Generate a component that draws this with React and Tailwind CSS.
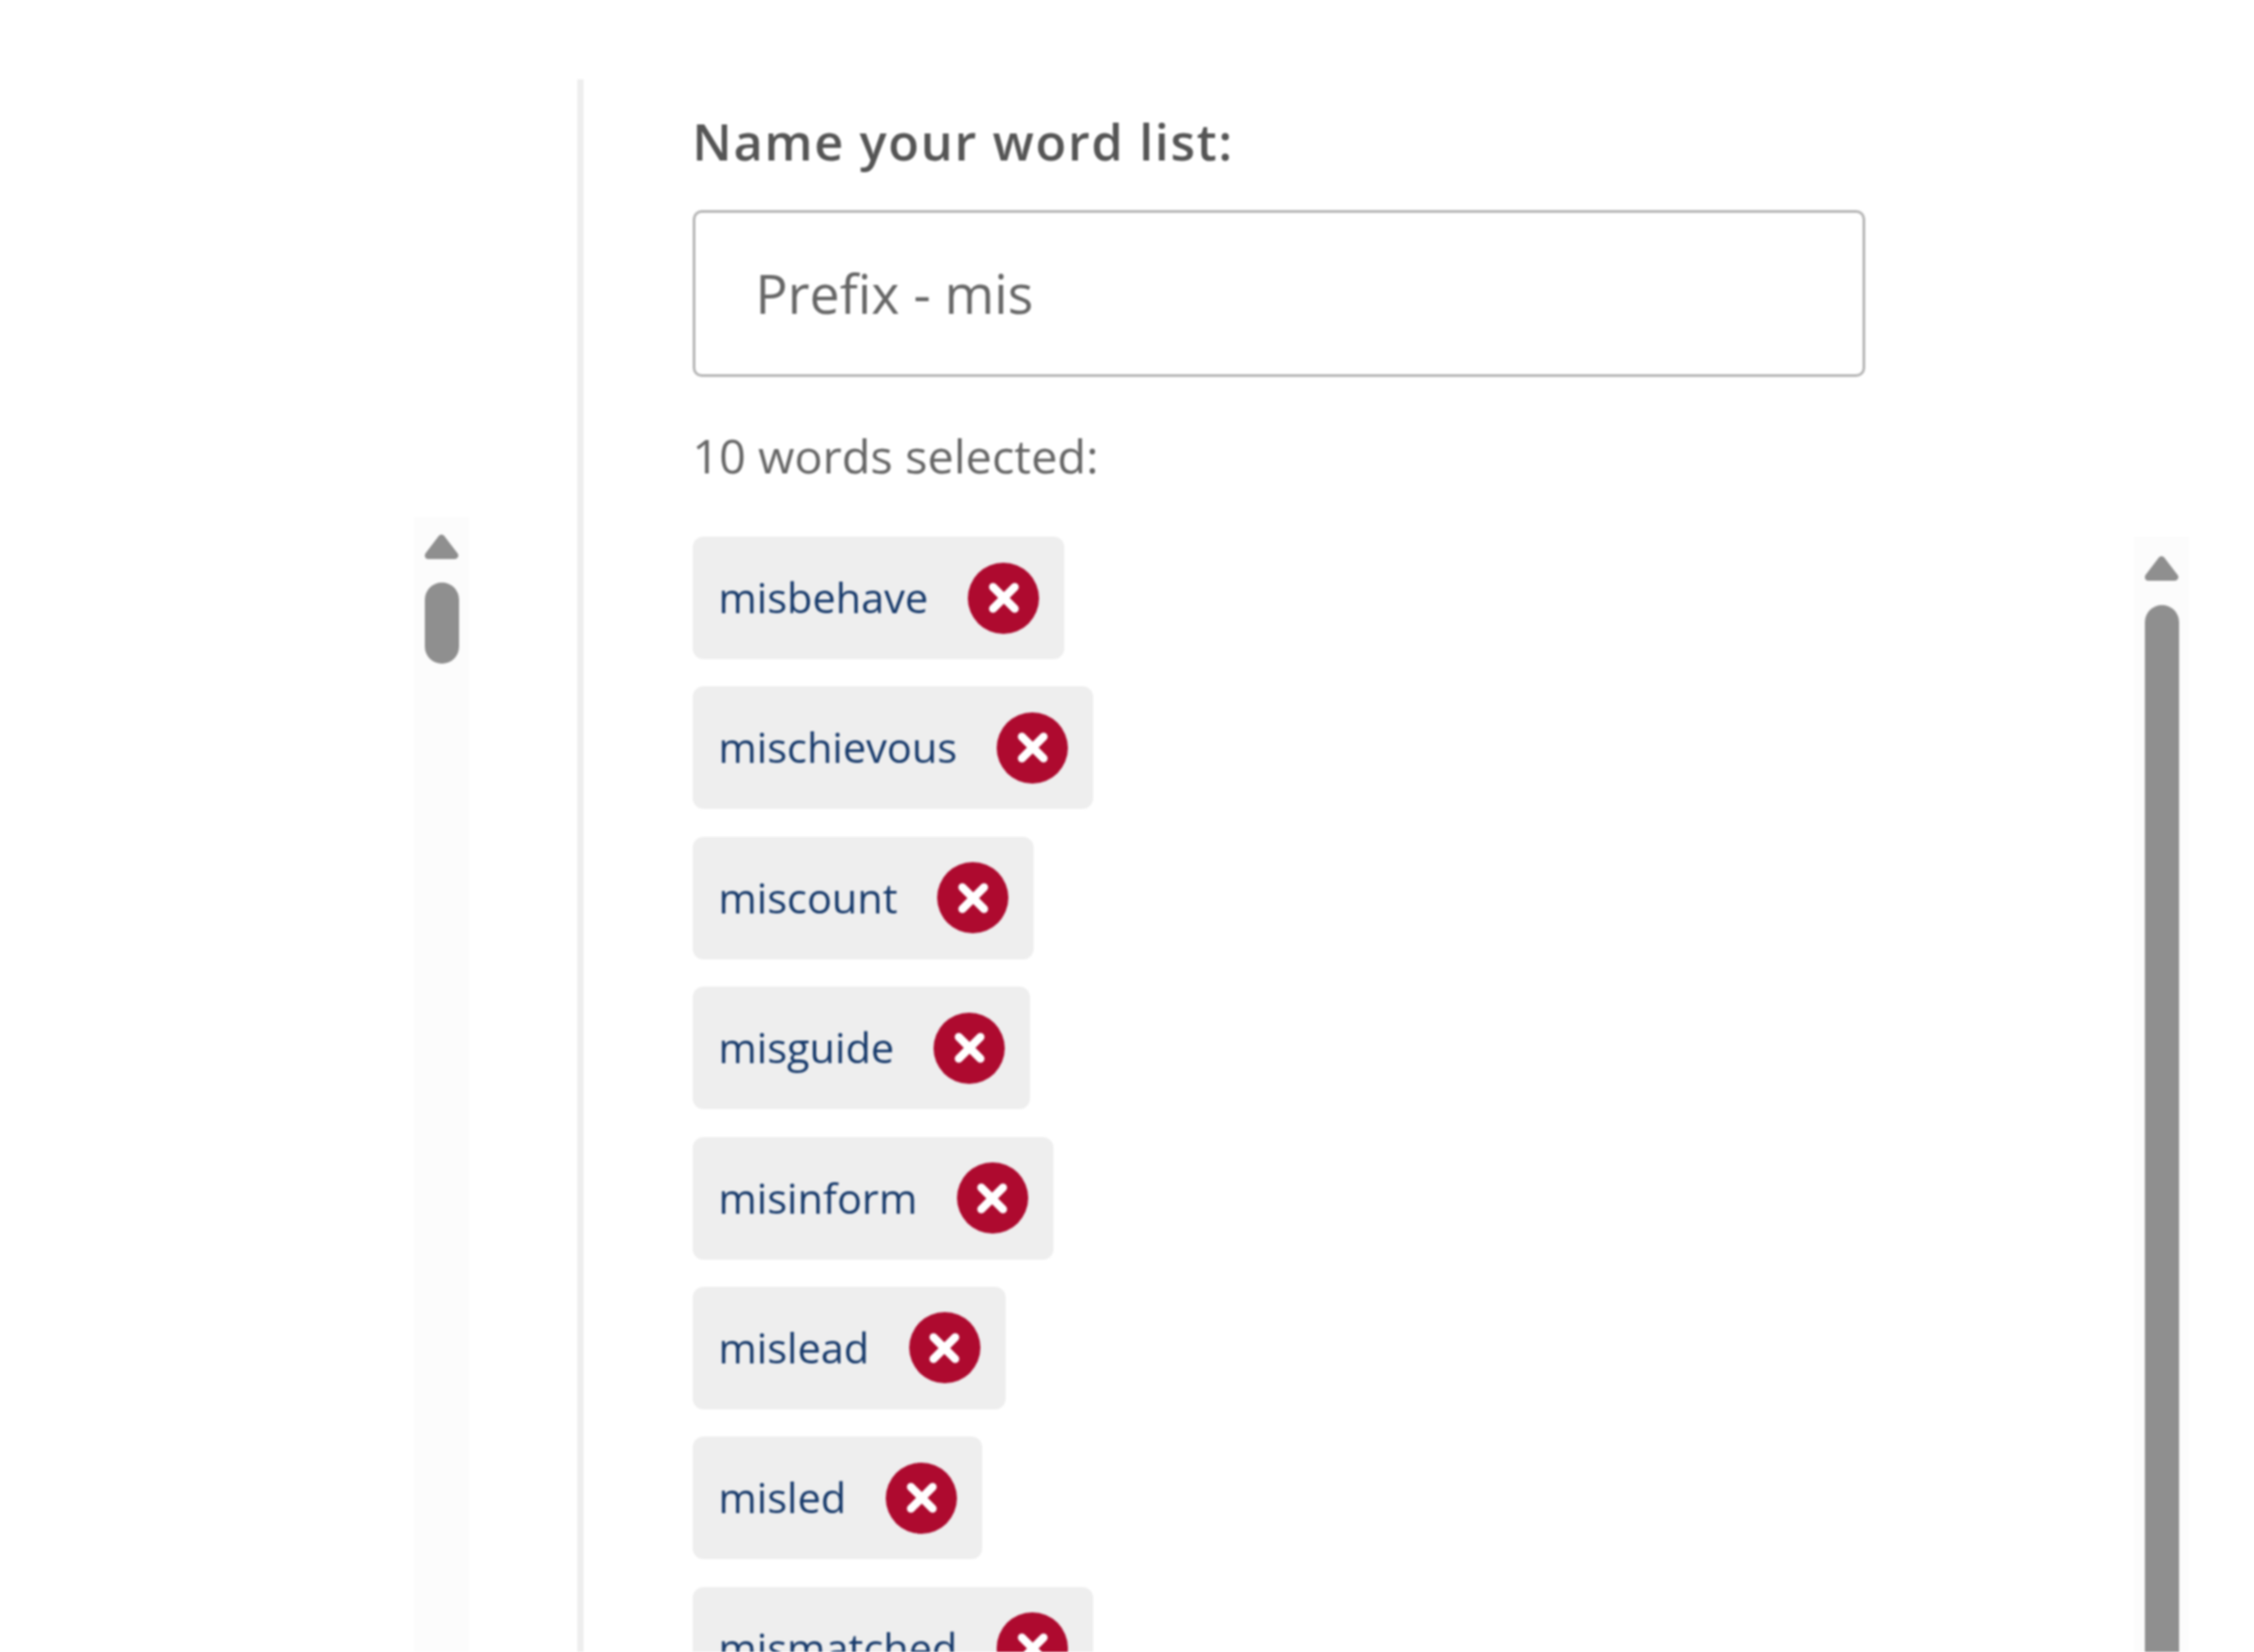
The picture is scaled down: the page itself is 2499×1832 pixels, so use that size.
const WORDS = [
  "misbehave",
  "mischievous",
  "miscount",
  "misguide",
  "misinform",
  "mislead",
  "misled",
  "mismatched",
];

function ScrollTrack({ padClass, thumbClass }) {
  return (
    <div className={`w-[61px] h-full bg-[#fcfcfc] flex flex-col items-center ${padClass}`}>
      <svg width="39" height="29" viewBox="0 0 39 29" className="shrink-0">
        <polygon points="19.5,5 34,24 5,24" fill="#8f8f8f" stroke="#8f8f8f" strokeWidth="8" strokeLinejoin="round" />
      </svg>
      <div className={`w-[38px] rounded-full bg-[#8f8f8f] shrink-0 ${thumbClass}`}></div>
    </div>
  );
}

function Tag({ word }) {
  return (
    <div className="h-[136px] w-fit shrink-0 flex items-center gap-[44px] pl-[29px] pr-[28px] bg-[#eeeeee] rounded-[12px]">
      <span className="text-[46px] leading-none font-medium text-[#173a6b] -mt-[2px]">{word}</span>
      <span className="w-[79px] h-[79px] rounded-full bg-[#ae0a2f] flex items-center justify-center">
        <svg width="34" height="34" viewBox="0 0 34 34">
          <path d="M5 5L29 29M29 5L5 29" stroke="#fff" strokeWidth="9" strokeLinecap="round" />
        </svg>
      </span>
    </div>
  );
}

export default function App() {
  return (
    <div className="w-[2499px] h-[1832px] overflow-hidden bg-white flex font-['Open_Sans',sans-serif] blur-[1px]">
      {/* left list scrollbar */}
      <div className="w-[640px] h-full pl-[459px] pt-[573px] shrink-0">
        <ScrollTrack padClass="pt-[19px]" thumbClass="h-[90px] mt-[25px]" />
      </div>
      <div className="w-[7px] mt-[88px] bg-[#eeeeee] shrink-0"></div>

      <div className="flex-1 pl-[120.5px] pr-[72px] pt-[119px] flex flex-col min-w-0">
        <label className="text-[56px] leading-[74px] font-semibold tracking-[1.8px] text-[#555555]">Name your word list:</label>
        <div className="mt-[39.5px] w-[1300px] h-[185px] shrink-0 border-[3px] border-[#b5b5b5] rounded-[10px] pl-[67px] flex items-center text-[59.5px] text-[#666666]">
          Prefix - mis
        </div>
        <p className="mt-[53.5px] text-[52px] leading-[68px] text-[#666666]">10 words selected:</p>

        <div className="mt-[56px] flex-1 flex justify-between min-h-0">
          <div className="flex flex-col gap-[30.4px]">
            {WORDS.map((w) => (
              <Tag key={w} word={w} />
            ))}
          </div>
          <ScrollTrack padClass="pt-[21px]" thumbClass="h-[1300px] mt-[25.5px]" />
        </div>
      </div>
    </div>
  );
}
